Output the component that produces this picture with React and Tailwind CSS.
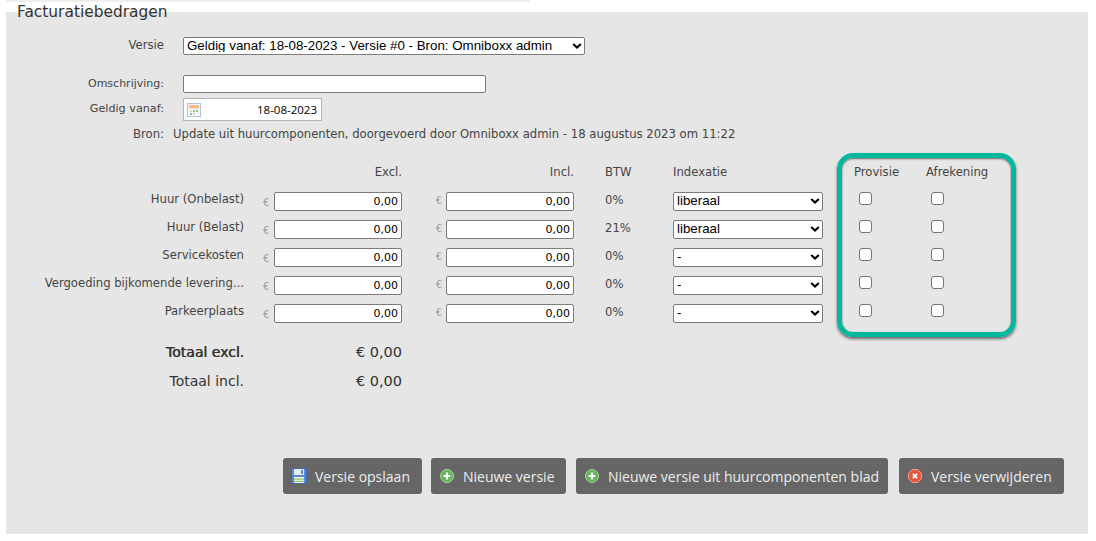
import React from "react";

const FONT = "font-['DejaVu_Sans',sans-serif]";

function Chevron() {
  return (
    <svg className="absolute right-[3px] top-1/2 -translate-y-1/2 pointer-events-none" width="10" height="7" viewBox="0 0 10 7">
      <path d="M1.2 1.4 L5 5 L8.8 1.4" fill="none" stroke="#000" strokeWidth="2" />
    </svg>
  );
}

function Select({ value, className = "" }) {
  return (
    <div className={`relative ${className}`}>
      <select
        defaultValue={value}
        className="appearance-none block w-full h-full bg-white border border-[#7b7b7b] rounded-[2px] pl-[3px] pr-4 text-[13.33px] leading-none text-black font-['Liberation_Sans',sans-serif] outline-none"
      >
        <option>{value}</option>
      </select>
      <Chevron />
    </div>
  );
}

function Floppy() {
  return (
    <svg width="16" height="16" viewBox="0 0 16 16" className="shrink-0">
      <rect x="0.5" y="0.5" width="15" height="15" rx="1" fill="#5b86d6" stroke="#3f66b5" />
      <rect x="3" y="1" width="10" height="6" fill="#e4ecf8" />
      <rect x="10" y="2" width="2" height="4" fill="#5b86d6" />
      <rect x="3" y="9" width="10" height="6" fill="#f4f7ee" />
      <rect x="3" y="10.5" width="10" height="1.2" fill="#8cc06a" />
      <rect x="3" y="12.8" width="10" height="1.2" fill="#8cc06a" />
    </svg>
  );
}

function PlusIcon() {
  return (
    <svg width="14" height="14" viewBox="0 0 14 14" className="shrink-0">
      <circle cx="7" cy="7" r="6.5" fill="#68b45a" stroke="#a9d79d" />
      <path d="M7 3.6v6.8M3.6 7h6.8" stroke="#fff" strokeWidth="2.2" />
    </svg>
  );
}

function DeleteIcon() {
  return (
    <svg width="14" height="14" viewBox="0 0 14 14" className="shrink-0">
      <path d="M4.2 0.6h5.6l3.6 3.6v5.6l-3.6 3.6H4.2L0.6 9.8V4.2z" fill="#e8553f" stroke="#f7a08f" />
      <path d="M4.8 4.8l4.4 4.4M9.2 4.8l-4.4 4.4" stroke="#fff" strokeWidth="1.8" />
    </svg>
  );
}

function Calendar() {
  return (
    <svg width="14" height="14" viewBox="0 0 14 14" className="shrink-0">
      <rect x="0.5" y="0.5" width="13" height="13" fill="#f6f8fb" stroke="#a9c4e4" />
      <rect x="2" y="2" width="10" height="3.5" fill="#f5b98a" />
      <rect x="3" y="7" width="2" height="2" fill="#cfe0c4" />
      <rect x="6" y="7" width="2" height="2" fill="#8fc27e" />
      <rect x="9" y="7" width="2" height="2" fill="#8fc27e" />
      <rect x="3" y="10" width="2" height="2" fill="#8fc27e" />
      <rect x="6" y="10" width="2" height="2" fill="#cfe0c4" />
    </svg>
  );
}

function Btn({ icon, label, iconGap, className }) {
  return (
    <button className={`h-9 rounded-[3px] bg-[#666666] text-[#ededed] text-[14px] flex items-center font-['Open_Sans',sans-serif] ${className}`} style={{ gap: iconGap }}>
      {icon}
      <span>{label}</span>
    </button>
  );
}

function Money() {
  return (
    <input
      readOnly
      value="0,00"
      className="w-full h-[19px] bg-white border border-[#7b7b7b] rounded-[2px] text-right pr-[3px] text-[11px] text-black outline-none"
    />
  );
}

function Euro() {
  return <span className="text-[10px] text-[#999] pl-[19px] pt-[2px]">€</span>;
}

function Check() {
  return <input type="checkbox" className="appearance-none block size-[13px] bg-white border border-[#767676] rounded-[3px]" />;
}

const rows = [
  { name: "Huur (Onbelast)", btw: "0%", idx: "liberaal" },
  { name: "Huur (Belast)", btw: "21%", idx: "liberaal" },
  { name: "Servicekosten", btw: "0%", idx: "-" },
  { name: "Vergoeding bijkomende levering...", btw: "0%", idx: "-" },
  { name: "Parkeerplaats", btw: "0%", idx: "-" },
];

export default function App() {
  return (
    <div className={`relative w-[1096px] h-[541px] bg-white overflow-hidden text-[11.65px] text-[#444] ${FONT}`}>
      <div className="ml-[6px] w-[524px] h-[2px] bg-[#eeeeee]" />
      <div className="relative ml-[6px] mt-[10px] w-[1082px] h-[522px] bg-[#e6e6e6]">
        <div className="absolute -top-[10px] left-[6px] px-[5px] h-[22px] flex items-center text-[15.4px] text-[#333]">
          Facturatiebedragen
        </div>

        {/* Versie */}
        <div className="pt-[25px] flex items-center h-[42px]">
          <div className="w-[158px] text-right">Versie</div>
          <Select value="Geldig vanaf: 18-08-2023 - Versie #0 - Bron: Omniboxx admin" className="ml-[19px] w-[402px] h-[18px]" />
        </div>

        <div className="mt-[21px] flex items-center h-[18px]">
          <div className="w-[158px] text-right text-[11px]">Omschrijving:</div>
          <input className="ml-[19px] w-[303px] h-[18px] bg-white border border-[#7b7b7b] rounded-[2px] outline-none" />
        </div>

        <div className="mt-[5px] flex items-center h-[23px]">
          <div className="w-[158px] text-right text-[11.2px]">Geldig vanaf:</div>
          <div className="ml-[19px] w-[139px] h-[23px] bg-white border border-[#b4b4b4] flex items-center justify-between pl-[3px] pr-[4px] text-black text-[11.5px] font-['Open_Sans',sans-serif]">
            <Calendar />
            <span>18-08-2023</span>
          </div>
        </div>

        <div className="mt-[5px] flex items-center h-[18px]">
          <div className="w-[158px] text-right">Bron:</div>
          <div className="ml-[9px]">Update uit huurcomponenten, doorgevoerd door Omniboxx admin - 18 augustus 2023 om 11:22</div>
        </div>

        {/* Tabel */}
        <div className="mt-[15px] grid grid-cols-[238px_30px_128px_44px_128px_31px_68px_150px_37px_71px_1fr] auto-rows-[28px] items-center">
          <div />
          <div />
          <div className="text-right">Excl.</div>
          <div />
          <div className="text-right">Incl.</div>
          <div />
          <div>BTW</div>
          <div>Indexatie</div>
          <div />
          <div className="-ml-[6px]">Provisie</div>
          <div className="-ml-[5px]">Afrekening</div>

          {rows.map((r) => (
            <React.Fragment key={r.name}>
              <div className="text-right -mt-[3px]">{r.name}</div>
              <Euro />
              <Money />
              <div className="text-right pr-[4px]"><span className="text-[10px] text-[#999]">€</span></div>
              <Money />
              <div />
              <div>{r.btw}</div>
              <Select value={r.idx} className="w-full h-[19px]" />
              <div />
              <div className="-mt-[6px] -ml-px"><Check /></div>
              <div className="-mt-[6px]"><Check /></div>
            </React.Fragment>
          ))}
        </div>

        {/* Totalen */}
        <div className="mt-[11px] flex items-center h-[29px] text-[14px] text-[#333]">
          <div className="w-[238px] text-right [text-shadow:0.5px_0_0_#333]">Totaal excl.</div>
          <div className="w-[158px] text-right text-[14.5px]">€ 0,00</div>
        </div>
        <div className="flex items-center h-[29px] text-[14px] text-[#333]">
          <div className="w-[238px] text-right">Totaal incl.</div>
          <div className="w-[158px] text-right text-[14.5px]">€ 0,00</div>
        </div>

        {/* Knoppen */}
        <div className="mt-[62px] ml-[277px] flex">
          <Btn icon={<Floppy />} label="Versie opslaan" iconGap="8px" className="w-[139px] pl-[8px]" />
          <Btn icon={<PlusIcon />} label="Nieuwe versie" iconGap="9px" className="ml-[9px] w-[135px] pl-[9px]" />
          <Btn icon={<PlusIcon />} label="Nieuwe versie uit huurcomponenten blad" iconGap="9px" className="ml-[10px] w-[312px] pl-[9px]" />
          <Btn icon={<DeleteIcon />} label="Versie verwijderen" iconGap="9px" className="ml-[11px] w-[165px] pl-[9px]" />
        </div>
      </div>

      {/* Annotatie */}
      <div className="absolute left-[837px] top-[153px] w-[179px] h-[184px] rounded-[16px] border-[5px] border-[#00b89c] shadow-[0_2px_3px_rgba(0,0,0,0.55),inset_0_1px_2px_rgba(0,0,0,0.55)] pointer-events-none" />
    </div>
  );
}
